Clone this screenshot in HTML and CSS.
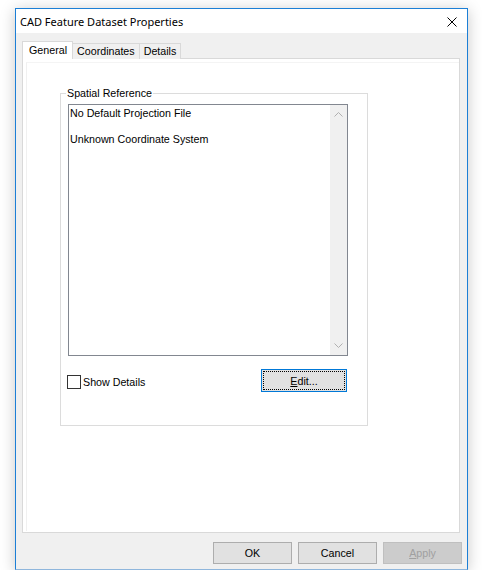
FILE: index.html
```html
<!DOCTYPE html>
<html>
<head>
<meta charset="utf-8">
<link rel="stylesheet" href="styles.css">
</head>
<body>
<div class="window">
  <div class="titlebar">
    <span class="title">CAD Feature Dataset Properties</span>
    <span class="close">
      <svg width="10" height="10" viewBox="0 0 10 10"><path d="M0.5 0.5 L9.5 9.5 M9.5 0.5 L0.5 9.5" stroke="#000" stroke-width="1" fill="none"/></svg>
    </span>
  </div>
  <div class="body">
    <div class="tabs">
      <div class="tab active">General</div>
      <div class="tab">Coordinates</div>
      <div class="tab">Details</div>
    </div>
    <div class="panel">
      <div class="page">
        <div class="group">
          <span class="legend">Spatial Reference</span>
          <div class="listbox">
            <div class="items">
              <div class="item">No Default Projection File</div>
              <div class="item">Unknown Coordinate System</div>
            </div>
            <div class="scrollbar">
              <svg width="9" height="5" viewBox="0 0 9 5"><path d="M0.5 4.5 L4.5 0.5 L8.5 4.5" stroke="#b0b0b0" fill="none"/></svg>
              <svg width="9" height="5" viewBox="0 0 9 5"><path d="M0.5 0.5 L4.5 4.5 L8.5 0.5" stroke="#b0b0b0" fill="none"/></svg>
            </div>
          </div>
          <div class="controls">
            <label class="check"><span class="box"></span>Show Details</label>
            <div class="btn edit"><span class="focus"><u>E</u>dit...</span></div>
          </div>
        </div>
      </div>
    </div>
    <div class="buttons">
      <div class="btn">OK</div>
      <div class="btn">Cancel</div>
      <div class="btn disabled"><u>A</u>pply</div>
    </div>
  </div>
</div>
</body>
</html>
```
FILE: styles.css
```css
html, body {
  margin: 0;
  padding: 0;
  background: #ffffff;
}
body {
  font-family: "Liberation Sans", Arial, sans-serif;
  font-size: 10.7px;
  color: #000;
}
.window {
  margin: 8px 0 0 15px;
  width: 453px;
  height: 562px;
  box-sizing: border-box;
  border: 1px solid #1c7fd6;
  border-bottom-color: #8fb6dc;
  display: flex;
  flex-direction: column;
  box-shadow: 0 2px 14px rgba(0, 0, 0, 0.22);
  background: #f0f0f0;
}
.titlebar {
  height: 24px;
  background: #ffffff;
  display: flex;
  align-items: center;
  justify-content: space-between;
  padding: 0 10px 0 4px;
}
.title {
  font-family: "Noto Sans", sans-serif;
  font-size: 11px;
  padding-top: 1px;
}
.close {
  display: flex;
  padding-top: 1px;
}
.body {
  flex: 1;
  display: flex;
  flex-direction: column;
  padding: 8px 0 0 6px;
}
.tabs {
  display: flex;
  align-items: flex-end;
  height: 18px;
  position: relative;
  z-index: 1;
  margin-bottom: -1px;
}
.tab {
  height: 16px;
  box-sizing: border-box;
  border: 1px solid #d9d9d9;
  border-bottom: none;
  background: #f0f0f0;
  padding: 0 4px;
  line-height: 15px;
  margin-left: -1px;
}
.tab:first-child { margin-left: 0; }
.tab.active {
  height: 18px;
  background: #ffffff;
  padding: 0 5px 0 6px;
  line-height: 16px;
  margin-right: -1px;
  position: relative;
  z-index: 2;
  border-color: #d9d9d9;
}
.tab.active + .tab { margin-left: 0; }
.panel {
  width: 438px;
  height: 475px;
  box-sizing: border-box;
  border: 1px solid #d9d9d9;
  background: #ffffff;
  padding: 3px 0 1px 3px;
}
.page {
  height: 100%;
  box-sizing: border-box;
  border-left: 1px solid #f0f0f0;
  border-top: 1px solid #f4f4f4;
  padding: 30px 0 0 33px;
}
.group {
  position: relative;
  width: 308px;
  height: 333px;
  box-sizing: border-box;
  border: 1px solid #dcdcdc;
  padding: 10px 0 0 7px;
}
.legend {
  position: absolute;
  top: -7px;
  left: 5px;
  background: #ffffff;
  padding: 0 1px;
  line-height: 13px;
  color: #000;
}
.listbox {
  width: 280px;
  height: 252px;
  box-sizing: border-box;
  border: 1px solid #828790;
  display: flex;
}
.items {
  flex: 1;
  padding: 1px 0 0 1px;
}
.item {
  height: 26px;
  line-height: 14px;
}
.scrollbar {
  width: 17px;
  background: #f0f0f0;
  display: flex;
  flex-direction: column;
  justify-content: space-between;
  align-items: center;
  padding: 7px 0 7px;
}
.controls {
  display: flex;
  justify-content: space-between;
  align-items: center;
  width: 280px;
  margin-top: 13px;
}
.check {
  display: flex;
  align-items: center;
  gap: 2px;
  margin-top: 2px;
  margin-left: -1px;
}
.box {
  width: 14px;
  height: 14px;
  box-sizing: border-box;
  border: 1px solid #333333;
  background: #fff;
}
.btn {
  height: 22px;
  width: 79px;
  box-sizing: border-box;
  border: 1px solid #adadad;
  background: #e1e1e1;
  display: flex;
  align-items: center;
  justify-content: center;
}
.btn.edit {
  width: 86px;
  height: 23px;
  border-color: #0078d7;
  padding: 1px;
  margin-right: 1px;
}
.focus {
  width: 100%;
  height: 100%;
  box-sizing: border-box;
  border: 1px dotted #000;
  display: flex;
  align-items: center;
  justify-content: center;
}
.buttons {
  display: flex;
  justify-content: flex-end;
  gap: 6px;
  padding: 9px 5px 0 0;
}
.btn.disabled {
  background: #cccccc;
  border-color: #bfbfbf;
  color: #a0a0a0;
}
u { text-decoration: underline; text-underline-offset: 1px; }
```
